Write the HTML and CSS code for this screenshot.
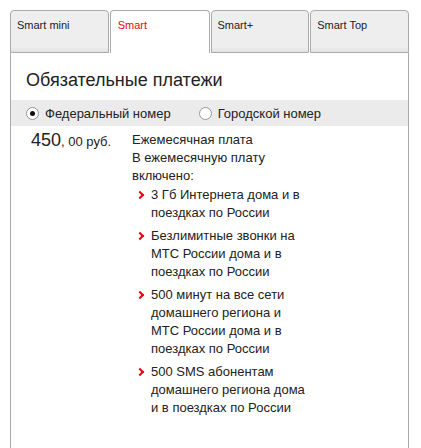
FILE: index.html
```html
<!DOCTYPE html>
<html lang="ru">
<head>
<meta charset="UTF-8">
<meta name="viewport" content="width=device-width, initial-scale=1.0">
<title>Smart</title>
<link rel="stylesheet" href="styles.css">
</head>
<body>
    <div class="tariffs">
        <div class="tabs">
            <div class="tab">Smart mini</div>
            <div class="tab active">Smart</div>
            <div class="tab">Smart+</div>
            <div class="tab">Smart Top</div>
        </div>

        <div class="panel">
            <h2>Обязательные платежи</h2>

            <div class="numbers">
                <label class="radio checked"><span class="dot"></span>Федеральный номер</label>
                <label class="radio"><span class="dot"></span>Городской номер</label>
            </div>

            <div class="fee">
                <div class="price"><span class="rub">450</span>, 00 руб.</div>
                <div class="info">
                    <p>Ежемесячная плата<br>В ежемесячную плату включено:</p>
                    <ul>
                        <li>3 Гб Интернета дома и в поездках по России</li>
                        <li>Безлимитные звонки на МТС России дома и в поездках по России</li>
                        <li>500 минут на все сети домашнего региона и МТС России дома и в поездках по России</li>
                        <li>500 SMS абонентам домашнего региона дома и в поездках по России</li>
                    </ul>
                </div>
            </div>
        </div>
    </div>
</body>
</html>
```

FILE: styles.css
```css
body {
    font-family: "Liberation Sans", Arial, sans-serif;
    margin: 0;
    background-color: #fff;
    color: #222;
}
.tariffs {
    width: 399px;
    margin: 10px 0 0 10px;
}
.tabs {
    display: flex;
    gap: 1px;
}
.tab {
    flex: 1;
    height: 43px;
    box-sizing: border-box;
    padding: 8px 6px;
    font-size: 11px;
    border: 1px solid #aaa;
    border-radius: 4px 4px 0 0;
    background: linear-gradient(to bottom, #eee 0, #eee 36px, #ddd 43px);
}
.tab.active {
    color: #e30611;
    background: #fff;
    border-bottom: none;
    padding-left: 7px;
}
.panel {
    border: 1px solid #aaa;
    border-top: none;
    height: 395px;
}
h2 {
    font-size: 18px;
    font-weight: normal;
    margin: 0;
    padding: 17px 15px 0;
    height: 30px;
}
.numbers {
    display: flex;
    align-items: center;
    gap: 28px;
    height: 26px;
    padding-left: 15px;
    background-color: #ebebeb;
    font-size: 13px;
}
.radio {
    display: flex;
    align-items: center;
    gap: 6px;
}
.dot {
    width: 11px;
    height: 11px;
    border: 1px solid #999;
    border-radius: 50%;
    background: #fff;
    position: relative;
}
.radio.checked .dot::after {
    content: "";
    position: absolute;
    left: 3px;
    top: 3px;
    width: 5px;
    height: 5px;
    border-radius: 50%;
    background: #111;
}
.fee {
    display: flex;
    padding: 5px 0 0 20px;
    font-size: 13px;
    line-height: 18px;
}
.price {
    width: 101px;
}
.rub {
    font-size: 18px;
}
.info {
    width: 175px;
}
.info p {
    margin: 0;
}
ul {
    list-style: none;
    margin: 1px 0 0;
    padding: 0 0 0 19px;
}
li {
    position: relative;
    margin-bottom: 5px;
}
li::before {
    content: "";
    position: absolute;
    left: -14px;
    top: 6px;
    width: 4px;
    height: 4px;
    border-top: 2px solid #e30611;
    border-right: 2px solid #e30611;
    transform: rotate(45deg);
}
```
